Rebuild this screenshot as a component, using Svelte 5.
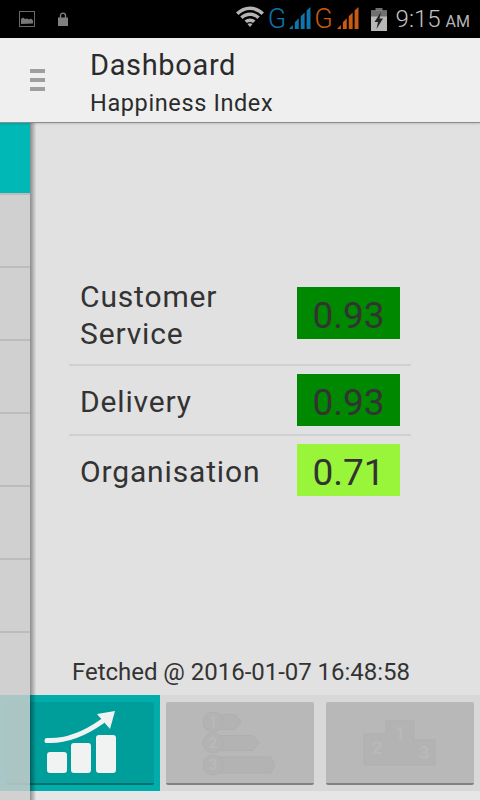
<script>
	const rows = [
		{ label: 'Customer Service', value: '0.93', color: '#008800', tall: true },
		{ label: 'Delivery', value: '0.93', color: '#008800', tall: false },
		{ label: 'Organisation', value: '0.71', color: '#99f53a', tall: false }
	];
	const drawerItems = [1, 2, 3, 4, 5, 6, 7];
</script>

<div class="screen">
	<div class="status">
		<svg class="ic-image" width="16" height="16" viewBox="0 0 16 16">
			<rect x="0.5" y="0.5" width="15" height="15" fill="none" stroke="#6a6a6a" />
			<path d="M2 13V8l2-1.500 2 1.500 2-.5 2 1 2-1 2 2v3z" fill="#777" />
		</svg>
		<svg class="ic-lock" width="10" height="14" viewBox="0 0 10 14">
			<path d="M2.500 6V3.600a2.500 2.500 0 0 1 5 0V6" fill="none" stroke="#808080" stroke-width="1.400" />
			<rect x="0" y="5.500" width="10" height="8.500" fill="#808080" />
		</svg>
		<div class="grow"></div>
		<svg class="ic-wifi" width="28" height="21" viewBox="0 0 28 21">
			<path d="M0 6.500C8-1.500 20-1.500 28 6.500l-2.500 2.400C18.500 2.500 9.500 2.500 2.500 8.900z" fill="#b4b4b4" />
			<path d="M4.200 10.500c5.800-5.300 13.800-5.300 19.600 0l-2.500 2.400c-4.500-3.800-10.100-3.800-14.600 0z" fill="#b4b4b4" />
			<path d="M8.500 14.500c3.300-2.800 7.700-2.800 11 0L17 17c-1.900-1.400-4.100-1.400-6 0z" fill="#b4b4b4" />
			<path d="M14 21l-2.500-3c1.500-1 3.500-1 5 0z" fill="#b4b4b4" />
		</svg>
		<span class="net blue">G</span>
		<svg class="ic-bars tight" width="24" height="22" viewBox="0 -0.500 22.500 22.500" fill="#0f75ad">
			<path d="M0 22l4-4v4zM6 22V15l4-4v11zM12 22V9l4-4v17zM18 22V3l4-3.500V22z" />
		</svg>
		<span class="net orange">G</span>
		<svg class="ic-bars" width="24" height="22" viewBox="0 -0.500 22.500 22.500" fill="#c75b12">
			<path d="M0 22l4-4v4zM6 22V15l4-4v11zM12 22V9l4-4v17zM18 22V3l4-3.500V22z" />
		</svg>
		<svg class="ic-batt" width="16" height="23" viewBox="0 0 16 23">
			<rect x="4.500" y="0" width="7" height="3" fill="#707070" />
			<rect x="0" y="2.500" width="16" height="20.500" fill="#b8b8b8" />
			<rect x="0" y="2.500" width="16" height="6" fill="#707070" />
			<path d="M10 4 3.500 14h3.500L5.500 21 12 10.500H8.500z" fill="#222" />
		</svg>
		<span class="time">9:15</span>
		<span class="ampm">AM</span>
	</div>

	<header class="header">
		<div class="burger"><span></span><span></span><span></span></div>
		<div class="titles">
			<div class="title">Dashboard</div>
			<div class="subtitle">Happiness Index</div>
		</div>
	</header>

	<main class="main">
		<div class="table">
			{#each rows as row}
				<div class="row" class:tall={row.tall}>
					<div class="label">{row.label}</div>
					<div class="value" style="background: {row.color}">{row.value}</div>
				</div>
			{/each}
		</div>
		<div class="fetched">Fetched @ 2016-01-07 16:48:58</div>
	</main>

	<nav class="tabs">
		<div class="tab active">
			<div class="card">
				<svg width="80" height="70" viewBox="40 709 80 70" fill="#f1f3f3">
					<rect x="47" y="753" width="20" height="21" rx="3" />
					<rect x="71" y="744" width="20" height="30" rx="3" />
					<rect x="96" y="736" width="20" height="38" rx="3" />
					<path d="M47 741.500c20 1 38-7 55-19" fill="none" stroke="#f1f3f3" stroke-width="5" stroke-linecap="round" />
					<path d="M97 715l18-3-5 18-7-8z" />
				</svg>
			</div>
		</div>
		<div class="tab">
			<div class="card">
				<svg width="80" height="70" viewBox="0 0 80 70" class="faint">
					<path d="M13 6.500h22l6 7.500-6 7.500H13z" />
					<path d="M13 27.500h40l6 7.500-6 7.500H13z" />
					<path d="M13 49h58l4 8-4 8H13z" />
					<circle cx="13" cy="14" r="10" />
					<circle cx="13" cy="35" r="10" />
					<circle cx="13" cy="57" r="10" />
					<text x="13" y="19">1</text>
					<text x="13" y="40">2</text>
					<text x="13" y="62">3</text>
				</svg>
			</div>
		</div>
		<div class="tab">
			<div class="card">
				<svg width="80" height="70" viewBox="0 0 80 70" class="faint">
					<path d="M4 57V26h22V13h28v19h21v25z" />
					<text class="big" x="40" y="32">1</text>
					<text class="big" x="17" y="46">2</text>
					<text class="big" x="64" y="51">3</text>
				</svg>
			</div>
		</div>
	</nav>
	<div class="foot"></div>

	<aside class="drawer">
		{#each drawerItems as item}
			<div class="drawer-item" class:current={item === 1}></div>
		{/each}
	</aside>
</div>

<style>
	:global(body) {
		margin: 0;
		background: #e1e1e1;
	}

	.screen {
		position: relative;
		display: flex;
		flex-direction: column;
		width: 480px;
		height: 800px;
		overflow: hidden;
		font-family: Roboto, sans-serif;
		color: #333;
		background: #e1e1e1;
	}

	.status {
		display: flex;
		align-items: center;
		flex: none;
		height: 38px;
		padding-left: 19px;
		box-sizing: border-box;
		background: #000;
	}

	.grow {
		flex: 1;
	}

	.ic-lock {
		margin-left: 23px;
	}

	.ic-wifi {
		margin-top: -5px;
	}

	.net {
		margin-left: 3px;
		font-size: 27px;
		font-weight: 300;
		line-height: 32px;
	}

	.blue {
		margin-left: 4px;
		color: #0f75ad;
	}

	.orange {
		margin-left: 2px;
		color: #c75b12;
	}

	.ic-bars {
		margin-left: 3px;
		margin-top: -3px;
	}

	.ic-bars.tight {
		margin-left: 2px;
	}

	.ic-batt {
		margin-left: 11px;
		margin-top: 1px;
	}

	.time {
		margin-left: 9px;
		font-size: 24px;
		font-weight: 300;
		color: #c4c4c4;
	}

	.ampm {
		margin-left: 5px;
		margin-right: 10px;
		margin-top: 4px;
		font-size: 16px;
		color: #b4b4b4;
	}

	.header {
		position: relative;
		z-index: 3;
		display: flex;
		align-items: center;
		flex: none;
		height: 85px;
		padding-left: 30px;
		box-sizing: border-box;
		background: #efefef;
		border-bottom: 1px solid #8c8c8c;
		box-shadow: 0 1px 2px rgba(0, 0, 0, 0.15);
	}

	.burger {
		display: flex;
		flex-direction: column;
		gap: 5px;
		width: 15px;
	}

	.burger span {
		height: 4px;
		background: #9e9e9e;
	}

	.titles {
		margin-left: 45px;
		padding-top: 2px;
	}

	.title {
		font-size: 29px;
		line-height: 44px;
		letter-spacing: 0.65px;
		color: #2b2b2b;
	}

	.subtitle {
		font-size: 23.500px;
		line-height: 32px;
		letter-spacing: 0.62px;
		color: #2b2b2b;
	}

	.main {
		display: flex;
		flex-direction: column;
		flex: 1;
		min-height: 0;
		padding: 138px 0 0 69px;
		box-sizing: border-box;
	}

	.table {
		width: 342px;
	}

	.row {
		display: flex;
		align-items: center;
		justify-content: space-between;
		height: 68px;
		padding: 0 11px;
		box-sizing: content-box;
		border-bottom: 2px solid #d0d0d0;
	}

	.row:last-child {
		border-bottom: none;
	}

	.row.tall {
		height: 103px;
	}

	.label {
		width: 190px;
		padding-top: 2px;
		font-size: 30px;
		line-height: 37px;
		letter-spacing: 0.85px;
	}

	.row.tall .label {
		padding-top: 4px;
	}

	.value {
		width: 103px;
		height: 52px;
		font-size: 37px;
		line-height: 57px;
		text-align: center;
	}

	.fetched {
		margin-top: auto;
		margin-bottom: 7px;
		margin-left: 3px;
		font-size: 24px;
		line-height: 32px;
		letter-spacing: -0.03px;
		white-space: nowrap;
	}

	.tabs {
		display: grid;
		grid-template-columns: repeat(3, 160px);
		flex: none;
		height: 96px;
		background: #d8d8d8;
	}

	.tab {
		display: flex;
		padding: 7px 6px 6px;
		box-sizing: border-box;
	}

	.tab.active {
		background: #00adaa;
	}

	.card {
		display: flex;
		align-items: center;
		justify-content: center;
		flex: 1;
		background: #b8b8b8;
		border-bottom: 2px solid #828282;
		border-radius: 2px;
	}

	.active .card {
		background: #009e9b;
		border-bottom-color: #00706e;
	}

	.faint {
		fill: #b3b3b3;
		stroke: #afafaf;
		stroke-width: 1;
	}

	.faint text {
		fill: #b9b9b9;
		stroke: none;
		font-size: 14px;
		font-weight: 700;
		text-anchor: middle;
	}

	.faint text.big {
		font-size: 19px;
	}

	.foot {
		flex: none;
		height: 9px;
		background: #e6e6e6;
	}

	.drawer {
		position: absolute;
		left: 0;
		top: 123px;
		bottom: 0;
		z-index: 2;
		width: 30px;
		background: rgba(205, 205, 205, 0.83);
	}

	.drawer::after {
		content: '';
		position: absolute;
		left: 100%;
		top: 0;
		bottom: 0;
		width: 6px;
		background: linear-gradient(to right, rgba(0, 0, 0, 0.38), rgba(0, 0, 0, 0.02));
	}

	.drawer-item {
		height: 71px;
		border-bottom: 2px solid #bcbcbc;
	}

	.drawer-item.current {
		height: 70px;
		background: #00b8b5;
	}
</style>
